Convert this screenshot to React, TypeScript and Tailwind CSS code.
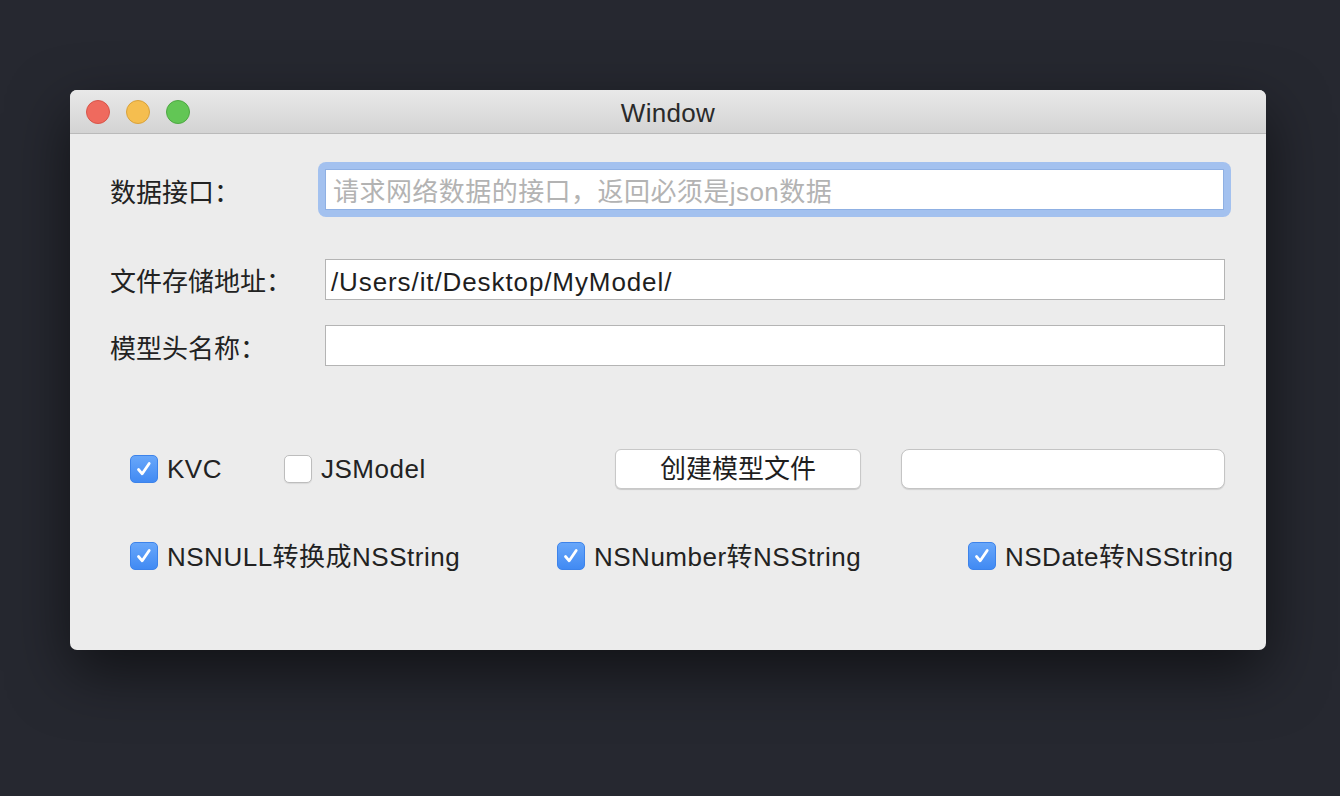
import React from "react";

const FONT = { fontFamily: '"Liberation Sans", "Noto Sans CJK SC", sans-serif' };

function Check({ checked }: { checked: boolean }) {
  if (checked) {
    return (
      <div className="w-[28px] h-[28px] rounded-[5px] bg-gradient-to-b from-[#68a7fa] to-[#418af3] border border-[#3d83ea] flex items-center justify-center shrink-0">
        <svg width="20" height="20" viewBox="0 0 20 20">
          <path d="M4.5 10.5 L8.2 14.8 L15.2 4.5" fill="none" stroke="white" strokeWidth="2.8" strokeLinecap="round" strokeLinejoin="round" />
        </svg>
      </div>
    );
  }
  return (
    <div className="w-[28px] h-[28px] rounded-[5px] bg-white border border-[#bdbdbd] shadow-[0_1px_1px_rgba(0,0,0,0.08)] shrink-0" />
  );
}

function CheckItem({ checked, label, cls, pad }: { checked: boolean; label: string; cls: string; pad: string }) {
  return (
    <div className={"flex items-center gap-[9px] shrink-0 whitespace-nowrap " + cls}>
      <Check checked={checked} />
      <span className={"text-[26px] text-[#222] leading-none tracking-[0.5px] " + pad}>{label}</span>
    </div>
  );
}

export default function App() {
  return (
    <div style={FONT} className="w-[1340px] h-[796px] bg-[#262830] overflow-hidden pt-[90px] pl-[70px]">
      <div className="w-[1196px] h-[560px] rounded-[7px] bg-[#ececec] shadow-[0_22px_60px_rgba(0,0,0,0.55)] flex flex-col overflow-hidden">
        {/* title bar */}
        <div className="h-[44px] shrink-0 bg-gradient-to-b from-[#e9e9e9] to-[#d3d3d3] border-b border-[#bababa] flex items-center pl-[16px] relative">
          <div className="flex gap-[16px]">
            <div className="w-[24px] h-[24px] rounded-full bg-[#ef6a5e] border border-[#d85549]" />
            <div className="w-[24px] h-[24px] rounded-full bg-[#f5be4f] border border-[#d9a23b]" />
            <div className="w-[24px] h-[24px] rounded-full bg-[#62c655] border border-[#4ea843]" />
          </div>
          <div className="absolute inset-0 flex items-center justify-center pt-[3px] text-[26px] text-[#2a2a2a] tracking-[0.3px]">Window</div>
        </div>

        {/* content */}
        <div className="flex flex-col pl-[40px] pr-[41px] pt-[28px]">
          {/* row 1 */}
          <div className="flex items-center h-[55px]">
            <div className="w-[208px] text-[26px] text-[#222] pt-[7px] whitespace-nowrap">数据接口：</div>
            <div className="flex-1 p-[7px] rounded-[8px] bg-[#a3c1ef] -mr-[6px]">
              <div className="h-[41px] bg-white border border-[#8fb0e3] flex items-center pl-[7px] pt-[5px] text-[26px] text-[#b3b3b3] tracking-[0.45px] whitespace-nowrap">
                请求网络数据的接口，返回必须是json数据
              </div>
            </div>
          </div>

          {/* row 2 */}
          <div className="flex items-center h-[41px] mt-[42px]">
            <div className="w-[215px] text-[26px] text-[#222] pt-[6px] whitespace-nowrap">文件存储地址：</div>
            <div className="flex-1 h-[41px] bg-white border border-[#b4b4b4] flex items-center pl-[5px] pt-[5px] text-[26px] text-[#1e1e1e] tracking-[0.9px] whitespace-nowrap">
              /Users/it/Desktop/MyModel/
            </div>
          </div>

          {/* row 3 */}
          <div className="flex items-center h-[41px] mt-[25px]">
            <div className="w-[215px] text-[26px] text-[#222] pt-[7px] whitespace-nowrap">模型头名称：</div>
            <div className="flex-1 h-[41px] bg-white border border-[#b4b4b4]" />
          </div>

          {/* row 4 */}
          <div className="flex items-center h-[40px] mt-[83px] pl-[20px]">
            <CheckItem checked label="KVC" cls="w-[154px]" pad="" />
            <CheckItem checked={false} label="JSModel" cls="w-[331px]" pad="" />
            <div className="w-[246px] h-[40px] shrink-0 bg-white rounded-[6px] border border-[#c8c8c8] shadow-[0_1px_1px_rgba(0,0,0,0.15)] flex items-center justify-center text-[26px] text-[#1e1e1e]">
              创建模型文件
            </div>
            <div className="ml-[40px] w-[324px] h-[40px] shrink-0 bg-white rounded-[8px] border border-[#c4c4c4] shadow-[0_1px_1px_rgba(0,0,0,0.12)]" />
          </div>

          {/* row 5 */}
          <div className="flex items-center h-[40px] mt-[47px] pl-[20px]">
            <CheckItem checked label="NSNULL转换成NSString" cls="w-[427px]" pad="pt-[1px]" />
            <CheckItem checked label="NSNumber转NSString" cls="w-[411px]" pad="pt-[1px]" />
            <CheckItem checked label="NSDate转NSString" cls="" pad="pt-[1px]" />
          </div>
        </div>
      </div>
    </div>
  );
}
